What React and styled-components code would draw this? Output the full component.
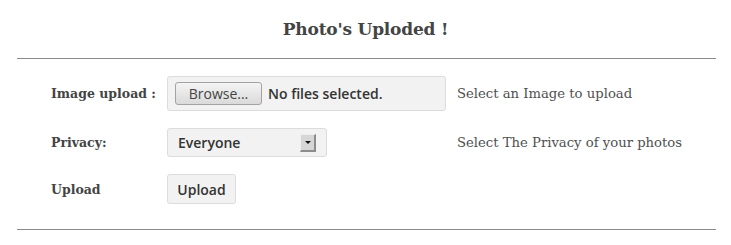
import React from "react";
import styled, { createGlobalStyle } from "styled-components";

const GlobalStyle = createGlobalStyle`
  body {
    margin: 0;
    background: #fff;
    font-family: "DejaVu Serif", "Liberation Serif", serif;
  }
`;

const Page = styled.div`
  width: 731px;
`;

const Title = styled.h2`
  margin: 0;
  padding: 18px 0 17px;
  text-align: center;
  font-size: 17px;
  line-height: 23px;
  font-weight: bold;
  color: #444;
  letter-spacing: -0.2px;
`;

const Rule = styled.hr`
  margin: 0 15px 0 17px;
  border: 0;
  border-top: 1px solid #8a8a8a;
`;

const Form = styled.div`
  display: grid;
  grid-template-columns: 116px 290px auto;
  row-gap: 17px;
  align-items: center;
  padding: 17px 0 25px 51px;
`;

const Label = styled.div`
  font-size: 12.5px;
  font-weight: bold;
  color: #444;
`;

const Hint = styled.div`
  font-size: 13.2px;
  color: #505050;
`;

const Control = styled.div`
  display: flex;
  align-items: center;
  box-sizing: border-box;
  width: ${(p) => p.$width}px;
  height: ${(p) => p.$height}px;
  padding: 0 ${(p) => p.$pad || 0}px;
  background: #f2f2f2;
  border: 1px solid #dcdcdc;
  border-radius: 3px;
  font-family: "Open Sans", "DejaVu Sans", sans-serif;
  font-size: 14px;
  font-weight: 600;
  color: #333;
`;

const BrowseButton = styled.span`
  display: inline-flex;
  align-items: center;
  justify-content: center;
  box-sizing: border-box;
  width: 87px;
  height: 23px;
  margin-right: 6px;
  border: 1px solid #a3a3a3;
  border-radius: 3px;
  background: linear-gradient(#f4f4f4, #dadada);
  color: #444;
  font-weight: 500;
`;

const SelectText = styled.span`
  flex: 1;
`;

const Arrow = styled.span`
  display: flex;
  align-items: center;
  justify-content: center;
  box-sizing: border-box;
  width: 16px;
  height: 18px;
  background: #d6d6d6;
  border-top: 1px solid #eee;
  border-left: 1px solid #eee;
  border-right: 2px solid #8c8c8c;
  border-bottom: 2px solid #8c8c8c;
`;

const Triangle = styled.span`
  width: 0;
  height: 0;
  border-left: 3px solid transparent;
  border-right: 3px solid transparent;
  border-top: 3px solid #111;
`;

const Cell = styled.div`
  display: flex;
`;

const ButtonControl = styled(Control).attrs({ as: "button" })`
  justify-content: center;
  cursor: pointer;
`;

export default function App() {
  return (
    <Page>
      <GlobalStyle />
      <Title>Photo's Uploded !</Title>
      <Rule />
      <Form>
        <Label>Image upload :</Label>
        <Cell>
          <Control $width={279} $height={35} $pad={7}>
            <BrowseButton>Browse...</BrowseButton>
            No files selected.
          </Control>
        </Cell>
        <Hint>Select an Image to upload</Hint>

        <Label>Privacy:</Label>
        <Cell>
          <Control $width={160} $height={29} $pad={10}>
            <SelectText>Everyone</SelectText>
            <Arrow>
              <Triangle />
            </Arrow>
          </Control>
        </Cell>
        <Hint>Select The Privacy of your photos</Hint>

        <Label>Upload</Label>
        <Cell>
          <ButtonControl $width={69} $height={30}>
            Upload
          </ButtonControl>
        </Cell>
        <div />
      </Form>
      <Rule />
    </Page>
  );
}
